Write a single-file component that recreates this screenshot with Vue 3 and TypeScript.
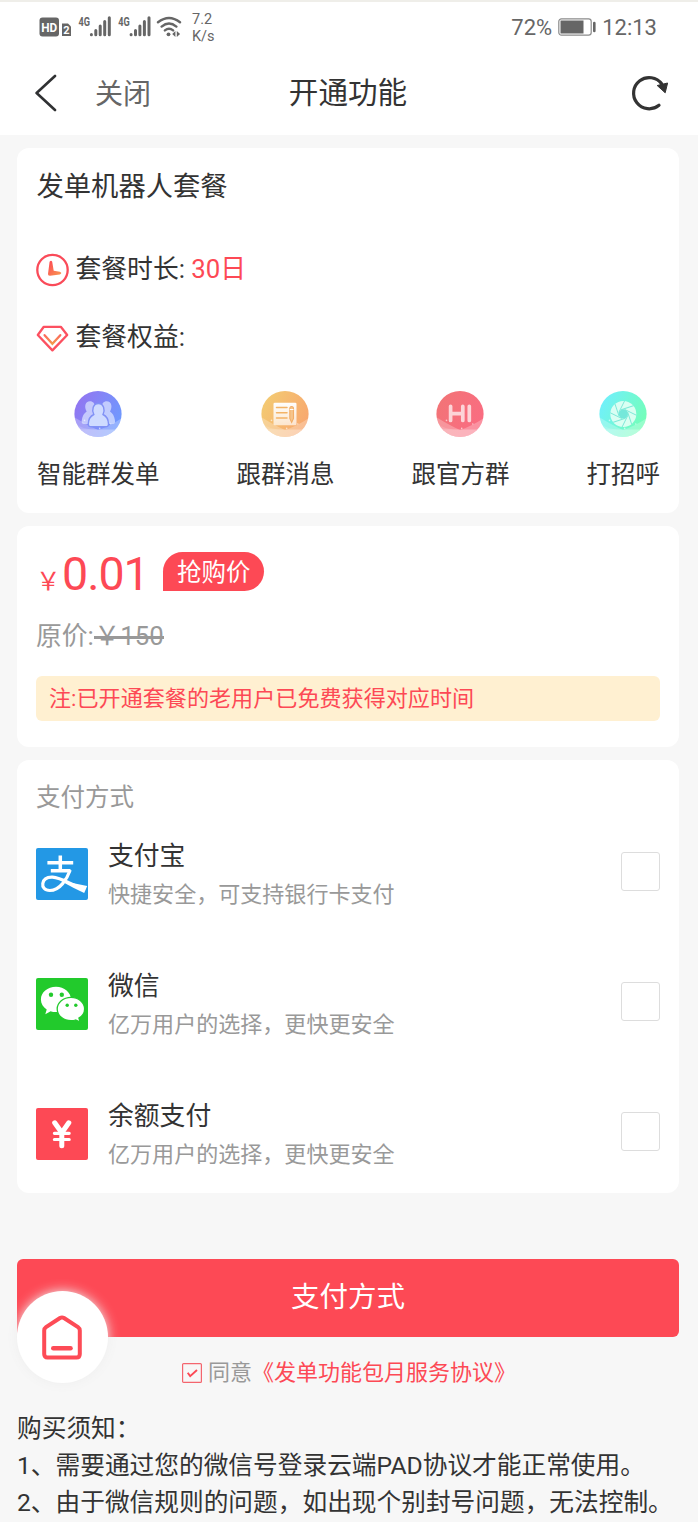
<script setup lang="ts">
interface Feature {
  label: string
  icon: 'group' | 'note' | 'hi' | 'lens'
  from: string
  to: string
}

interface PayMethod {
  id: 'alipay' | 'wechat' | 'balance'
  name: string
  desc: string
}

const features: Feature[] = [
  { label: '智能群发单', icon: 'group', from: '#9474f0', to: '#6d9bff' },
  { label: '跟群消息', icon: 'note', from: '#f3cc72', to: '#f8a66f' },
  { label: '跟官方群', icon: 'hi', from: '#f27476', to: '#fa6c82' },
  { label: '打招呼', icon: 'lens', from: '#70efff', to: '#74ffb4' },
]

const methods: PayMethod[] = [
  { id: 'alipay', name: '支付宝', desc: '快捷安全，可支持银行卡支付' },
  { id: 'wechat', name: '微信', desc: '亿万用户的选择，更快更安全' },
  { id: 'balance', name: '余额支付', desc: '亿万用户的选择，更快更安全' },
]

const blades = [0, 45, 90, 135, 180, 225, 270, 315]
</script>

<template>
  <div class="page">
    <header class="top">
      <div class="status">
        <svg class="signals" width="146" height="26" viewBox="0 0 146 26">
          <rect x="1.500" y="3.500" width="19.500" height="19" rx="3" fill="#666" />
          <text x="11.200" y="17.600" class="hd" text-anchor="middle" textLength="16" lengthAdjust="spacingAndGlyphs">HD</text>
          <path d="M24 9.500h6l3 3V22h-9z" fill="#666" />
          <text x="28.400" y="20.300" class="sim" text-anchor="middle">2</text>
          <g v-for="x in [0, 39.7]" :key="x" :transform="`translate(${x} 0)`">
            <text x="40.500" y="12.400" class="net" textLength="11.500" lengthAdjust="spacingAndGlyphs">4G</text>
            <path d="M53.400 20.500v.2M57.800 16.400v4.300M62.200 12v8.700M66.700 7.600v13.100M71.300 3.800v16.900" stroke="#666" stroke-width="3" stroke-linecap="round" />
          </g>
          <g fill="none" stroke="#666" stroke-width="2.400" stroke-linecap="round">
            <path d="M120 8.300q11-8.600 22 0M123.600 12.600q7.400-6.200 14.800 0M126.900 16.400q4.100-3.500 8.200 0" />
          </g>
          <circle cx="130.500" cy="20.300" r="1.900" fill="#666" />
          <path d="M137.400 17v6l-3.200-3zM138.800 17v6l3.300-3z" fill="#666" />
        </svg>
        <div class="speed"><span>7.2</span><span>K/s</span></div>
        <span class="percent">72%</span>
        <svg class="battery" width="38" height="18" viewBox="0 0 38 18">
          <rect x=".8" y=".8" width="32.400" height="16.400" rx="2.600" fill="none" stroke="#8b8b8b" stroke-width="1.200" />
          <rect x="2.500" y="2.500" width="23" height="13" fill="#666" />
          <path d="M36.300 5v8" stroke="#666" stroke-width="2.600" stroke-linecap="round" />
        </svg>
        <span class="clock">12:13</span>
      </div>
      <nav class="nav">
        <svg class="back" width="24" height="38" viewBox="0 0 24 38">
          <path d="M20 2L1.600 19 20 36" fill="none" stroke="#303133" stroke-width="2.600" stroke-linecap="round" stroke-linejoin="round" />
        </svg>
        <span class="close">关闭</span>
        <h1>开通功能</h1>
        <svg class="refresh" width="38" height="38" viewBox="0 0 38 38">
          <path d="M28 31.300A15.600 15.600 0 1 1 30.800 10" fill="none" stroke="#333" stroke-width="3.200" stroke-linecap="round" />
          <path d="M26.200 11.500L36.600 9 34.200 18.800z" fill="#333" stroke="#333" stroke-linejoin="round" />
        </svg>
      </nav>
    </header>

    <main>
      <section class="card plan">
        <h2>发单机器人套餐</h2>
        <div class="line duration">
          <svg width="33" height="34" viewBox="0 0 33 34">
            <defs>
              <linearGradient id="hand" x1="0" y1="0" x2="1" y2="1">
                <stop offset="0" stop-color="#fe4555" />
                <stop offset="1" stop-color="#f79a50" />
              </linearGradient>
            </defs>
            <circle cx="16.500" cy="17" r="15.200" fill="none" stroke="#fa4b59" stroke-width="2.300" />
            <path d="M13.600 8.800q1.500-2.200 2.600 0L17.700 17.800 23.800 18.800q3 1.300 0 2.600L14 22.800q-2.200.1-2-1.800z" fill="url(#hand)" />
          </svg>
          <span>套餐时长: <em>30日</em></span>
        </div>
        <div class="line">
          <svg width="33" height="34" viewBox="0 0 33 34">
            <path d="M7.800 5.800H24.800L31.200 14 16.400 29.400 1.800 14z" fill="none" stroke="#fc5060" stroke-width="2.300" stroke-linejoin="round" />
            <path d="M8.600 14.200l7.800 8.600 7.900-8.600" fill="none" stroke="url(#chevron)" stroke-width="2.300" stroke-linecap="round" />
            <defs>
              <linearGradient id="chevron" x1="0" y1="0" x2="0" y2="1">
                <stop offset="0" stop-color="#fc695b" />
                <stop offset="1" stop-color="#f3994c" />
              </linearGradient>
            </defs>
          </svg>
          <span>套餐权益:</span>
        </div>
        <ul class="features">
          <li v-for="f in features" :key="f.icon">
            <svg width="48" height="48" viewBox="0 0 48 48">
              <defs>
                <linearGradient :id="`bg-${f.icon}`" x1="0" y1=".2" x2="1" y2=".7">
                  <stop offset="0" :stop-color="f.from" />
                  <stop offset="1" :stop-color="f.to" />
                </linearGradient>
                <linearGradient id="fade" x1="0" y1="0" x2="0" y2="1">
                  <stop offset="0" stop-color="#fff" stop-opacity=".98" />
                  <stop offset="1" stop-color="#fff" stop-opacity=".65" />
                </linearGradient>
                <clipPath :id="`clip-${f.icon}`"><ellipse cx="24" cy="24" rx="23.600" ry="23" /></clipPath>
              </defs>
              <g :clip-path="`url(#clip-${f.icon})`">
                <rect width="48" height="48" :fill="`url(#bg-${f.icon})`" />
                <path d="M0 27Q13 35 24 40 36 36 48 28V48H0z" fill="#fff" fill-opacity=".26" />
                <path d="M0 39.500H48V48H0z" fill="#fff" fill-opacity=".3" />
                <path d="M0 33Q9 40 24 40L0 40z" fill="#fff" fill-opacity=".14" />
                <g v-if="f.icon === 'group'">
                  <g fill="#dce5ff" fill-opacity=".72">
                    <path d="M12.700 21.500C10 17 11 11.300 16 11.300c3 0 5 2.300 5 5.700V34h-11c-2.300 0-2.600-1.500-2.200-4 .6-4 2.400-6.900 4.900-8.500z" />
                    <path d="M36 21.500C38.700 17 37.700 11.300 32.700 11.300c-3 0-5 2.300-5 5.700V34h11c2.300 0 2.600-1.500 2.200-4-.6-4-2.400-6.900-4.900-8.500z" />
                  </g>
                  <path d="M19.800 24.500c-2.300-4.500-.8-11 4.600-11s6.900 6.500 4.600 11c3.200 1.500 5.300 4.500 5.500 9.200.1 2.500-1.200 3.100-3.100 3.100h-14c-2 0-3.200-.6-3.100-3.100.2-4.700 2.300-7.700 5.500-9.200z" fill="#cfdbff" stroke="#8191f5" stroke-width="1.400" />
                </g>
                <g v-else-if="f.icon === 'note'">
                  <rect x="12.500" y="12.800" width="23" height="22.500" rx="1.300" fill="url(#fade)" />
                  <path d="M15.500 17.600h10.500M15.500 22.800h10.500M15.500 28h10.500" stroke="#f3b366" stroke-width="1.500" stroke-linecap="round" />
                  <path d="M28.800 18.500c0-2.700 3.700-2.700 3.700 0v10l-1.850 4-1.850-4z" fill="#f6c58b" stroke="#f2ae68" stroke-width="1.100" />
                  <path d="M28.800 19.500h3.700" stroke="#fff" />
                </g>
                <g v-else-if="f.icon === 'hi'">
                  <path d="M14.600 16.300V30.500M26.800 16.300V30.500M14.600 23.700H26.800M33.300 16.300V30.500" stroke="#fff" stroke-opacity=".7" stroke-width="3.700" stroke-linecap="round" />
                </g>
                <g v-else>
                  <circle cx="24.300" cy="24" r="13" fill="#e6fff5" fill-opacity=".9" />
                  <circle cx="24.300" cy="24" r="4.700" fill="#74e8da" />
                  <path v-for="a in blades" :key="a" d="M19.800 22.500L25.500 11" :transform="`rotate(${a} 24.3 24)`" stroke="#7de9d8" stroke-width="1" />
                </g>
                <g fill="#fff" fill-opacity=".6">
                  <circle cx="25.700" cy="38.400" r=".8" />
                  <circle cx="10.500" cy="30.400" r=".8" />
                  <circle cx="36.800" cy="34" r=".7" />
                </g>
              </g>
            </svg>
            <span>{{ f.label }}</span>
          </li>
        </ul>
      </section>

      <section class="card price">
        <div class="now">
          <span class="yen">￥</span><strong>0.01</strong><span class="tag">抢购价</span>
        </div>
        <p class="origin">原价:<s>￥150</s></p>
        <p class="note">注:已开通套餐的老用户已免费获得对应时间</p>
      </section>

      <section class="card pay">
        <h3>支付方式</h3>
        <div v-for="m in methods" :key="m.id" class="method">
          <svg width="52" height="52" viewBox="0 0 52 52">
            <g v-if="m.id === 'alipay'">
              <rect width="52" height="52" rx="2" fill="#2398e5" />
              <path d="M11.400 14.700H37.200M24.300 7.500V22M14.800 22.700H34.500" fill="none" stroke="#fff" stroke-width="3.500" />
              <path d="M34.200 22C31 31 24 42.500 13.800 42.500 8.500 42.500 6.200 39 6.800 35.500 7.500 31.500 11 29 16.500 29.200 25 29.800 34 36 49 41.500" fill="none" stroke="#fff" stroke-width="3.200" />
              <path d="M31.500 34L51.200 38 48.200 44.900Q38 40.500 28.500 35z" fill="#fff" />
            </g>
            <g v-else-if="m.id === 'wechat'">
              <rect width="52" height="52" rx="2" fill="#22ca2c" />
              <path d="M20 8.800C11.500 8.800 4.900 14.400 4.900 21.500c0 4.200 2.300 7.600 5.800 9.900l-1.400 4.800 5.400-2.900c2 .6 3.300.8 5.300.8 8.300 0 15-5.700 15-12.600S28.300 8.800 20 8.800z" fill="#fff" />
              <path d="M35 19.300c-7.600 0-13.800 5.100-13.800 11.600S27.400 42.700 35 42.700c1.600 0 3.200-.2 4.600-.7l4.700 2.200-1.400-4.100c3.500-2.100 5.700-5.200 5.700-9.200 0-6.500-6.100-11.600-13.600-11.600z" fill="#fff" stroke="#22ca2c" stroke-width="1.300" />
              <circle cx="15" cy="16.800" r="2.200" fill="#22ca2c" /><circle cx="25.800" cy="16.800" r="2.200" fill="#22ca2c" />
              <circle cx="31.200" cy="27.300" r="1.700" fill="#22ca2c" /><circle cx="39.800" cy="27.300" r="1.700" fill="#22ca2c" />
            </g>
            <g v-else>
              <rect width="52" height="52" rx="2" fill="#fd4955" />
              <path d="M18.700 14.800L25.800 24.800 32.800 14.800M25.800 25V37.700" fill="none" stroke="#fff" stroke-width="5" stroke-linecap="round" stroke-linejoin="round" />
              <path d="M18.400 25.300H33.200M18.400 31.500H33.200" stroke="#fff" stroke-width="3.200" stroke-linecap="round" />
            </g>
          </svg>
          <div class="info">
            <span class="name">{{ m.name }}</span>
            <span class="desc">{{ m.desc }}</span>
          </div>
          <span class="box"></span>
        </div>
      </section>

      <button class="submit">支付方式</button>

      <div class="agree">
        <svg width="20" height="20" viewBox="0 0 20 20">
          <rect x=".6" y=".6" width="18.800" height="18.800" rx="1" fill="none" stroke="#f4656e" stroke-width="1.200" />
          <path d="M5.700 9.700L8.200 13.100 15 7" fill="none" stroke="#fc4955" stroke-width="1.900" />
        </svg>
        <span>同意</span><a>《发单功能包月服务协议》</a>
      </div>

      <div class="rules">
        <p>购买须知：</p>
        <p>1、需要通过您的微信号登录云端PAD协议才能正常使用。</p>
        <p>2、由于微信规则的问题，如出现个别封号问题，无法控制。</p>
      </div>
    </main>

    <div class="home">
      <svg width="42" height="46" viewBox="0 0 42 46">
        <path d="M3.200 16.500Q3.200 14.500 5 13.200L19 4Q21 2.800 23 4L37 13.200Q38.800 14.500 38.800 16.500V40Q38.800 43.500 35.500 43.500H6.500Q3.200 43.500 3.200 40z" fill="none" stroke="#fd4b56" stroke-width="4" />
        <path d="M12.300 34.300H29.500" stroke="#fd4b56" stroke-width="4.600" stroke-linecap="round" />
      </svg>
    </div>
  </div>
</template>

<style>
body {
  background: #f7f7f7;
  overflow: hidden;
}
</style>

<style scoped>
.page {
  position: relative;
  box-sizing: border-box;
  width: 698px;
  height: 1522px;
  overflow: hidden;
  background: #f7f7f7;
  color: #333;
  font-family: Roboto, 'Noto Sans CJK SC', sans-serif;
  font-weight: 400;
}
h1, h2, h3, p, ul { margin: 0; padding: 0; font-weight: 400; list-style: none; }
svg { display: block; flex: none; }
.top {
  box-sizing: border-box;
  height: 135px;
  border-top: 2px solid #efeee9;
  background: #fff;
}
.status {
  display: flex;
  align-items: center;
  height: 50px;
  padding: 0 41px 0 38px;
  color: #666;
}
.hd { font: 700 13px Roboto, sans-serif; fill: #fff; }
.sim { font: 700 11px Roboto, sans-serif; fill: #fff; }
.net { font: 700 13.500px Roboto, sans-serif; fill: #666; }
.speed {
  display: flex;
  flex-direction: column;
  margin-left: 8px;
  padding-top: 1px;
  font-size: 14.500px;
  line-height: 17px;
}
.percent { margin-left: auto; font-size: 22px; }
.battery { margin: -1px 0 0 6px; }
.clock { margin-left: 6px; font-size: 22px; }
.nav {
  display: grid;
  grid-template-columns: 60px 1fr auto 1fr 38px;
  align-items: center;
  height: 82px;
  padding: 0 29px 0 35px;
}
.close { padding-top: 3px; color: #666; font-size: 28px; line-height: 40px; }
h1 { font-size: 29.600px; line-height: 40px; }
.nav h1 { margin: 0 18px 0 -12px; }
.refresh { grid-column: 5; }
main {
  display: flex;
  flex-direction: column;
  padding: 13px 19px 0 17px;
}
.card {
  box-sizing: border-box;
  padding: 0 19px 0 20px;
  margin-bottom: 13px;
  border-radius: 12px;
  background: #fff;
}
.plan { height: 365px; padding-top: 19px; }
h2 { height: 40px; margin-left: -.5px; font-size: 27.300px; line-height: 40px; }
.line {
  display: flex;
  align-items: center;
  gap: 6.500px;
  height: 40px;
  margin: 0 0 28px -1px;
  font-size: 25.800px;
  line-height: 40px;
}
.line svg { margin-top: 2px; }
.duration { margin-top: 42px; }
.line em { color: #fd4955; font-style: normal; }
.features { display: flex; justify-content: space-between; margin-top: 33px; }
.features li {
  display: flex;
  flex-direction: column;
  align-items: center;
  font-size: 24.500px;
  line-height: 40px;
}
.features svg { margin-left: -1px; }
.features span { margin-top: 17px; }
.price { height: 221px; padding-top: 22px; padding-left: 19px; }
.now { display: flex; align-items: baseline; height: 51px; color: #fd4955; line-height: 53px; }
.yen { width: 26px; font-size: 24.500px; }
.now strong { width: 85px; font-size: 46.500px; font-weight: 400; letter-spacing: -1px; }
.tag {
  align-self: flex-start;
  height: 39px;
  margin: 4px 0 0 16px;
  padding: 0 13px 0 14px;
  border-radius: 20px 20px 20px 0;
  background: #fd4955;
  color: #fff;
  font-size: 24.500px;
  line-height: 42px;
}
.origin { height: 40px; margin-top: 17px; color: #999; font-size: 25.800px; line-height: 40px; }
.origin s { position: relative; margin-left: .5px; text-decoration: none; }
.origin s::after {
  content: '';
  position: absolute;
  right: 0;
  left: 0;
  top: 15px;
  height: 3px;
  background: #999;
}
.note {
  height: 45px;
  margin-top: 20px;
  padding-left: 13px;
  border-radius: 6px;
  background: #fff0d1;
  color: #fd4955;
  font-size: 22.100px;
  line-height: 45px;
}
.pay { height: 433px; padding: 18px 19px 0; }
h3 { height: 40px; margin-bottom: 19px; color: #999; font-size: 24.500px; line-height: 40px; }
.method { display: flex; align-items: flex-start; height: 130px; }
.method > svg { margin-top: 11px; }
.info { display: flex; flex: 1; flex-direction: column; padding-left: 20px; }
.name { height: 38px; font-size: 25.800px; line-height: 39px; }
.desc { height: 39px; color: #999; font-size: 22.050px; line-height: 39px; }
.box {
  box-sizing: border-box;
  width: 39px;
  height: 39px;
  margin-top: 15px;
  border: 1.500px solid #ddd;
  border-radius: 3px;
}
.submit {
  height: 78px;
  margin: 53px 0 0;
  padding: 0;
  border: 0;
  border-radius: 6px;
  background: #fd4955;
  color: #fff;
  font: inherit;
  font-size: 28.500px;
  line-height: 76px;
}
.agree {
  display: flex;
  align-items: center;
  height: 40px;
  margin-top: 16px;
  padding-left: 165px;
  color: #999;
  font-size: 22px;
  line-height: 42px;
}
.agree span { margin-left: 6px; }
.agree a { color: #fd4955; }
.rules { margin-top: 17px; font-size: 24.700px; line-height: 37px; white-space: nowrap; }
.home {
  position: absolute;
  left: 17px;
  top: 1291px;
  display: flex;
  align-items: center;
  justify-content: center;
  width: 91px;
  height: 92px;
  border-radius: 50%;
  background: #fff;
  box-shadow: 0 0 12px #eee;
}
.home svg { margin-left: -1px; }
</style>
